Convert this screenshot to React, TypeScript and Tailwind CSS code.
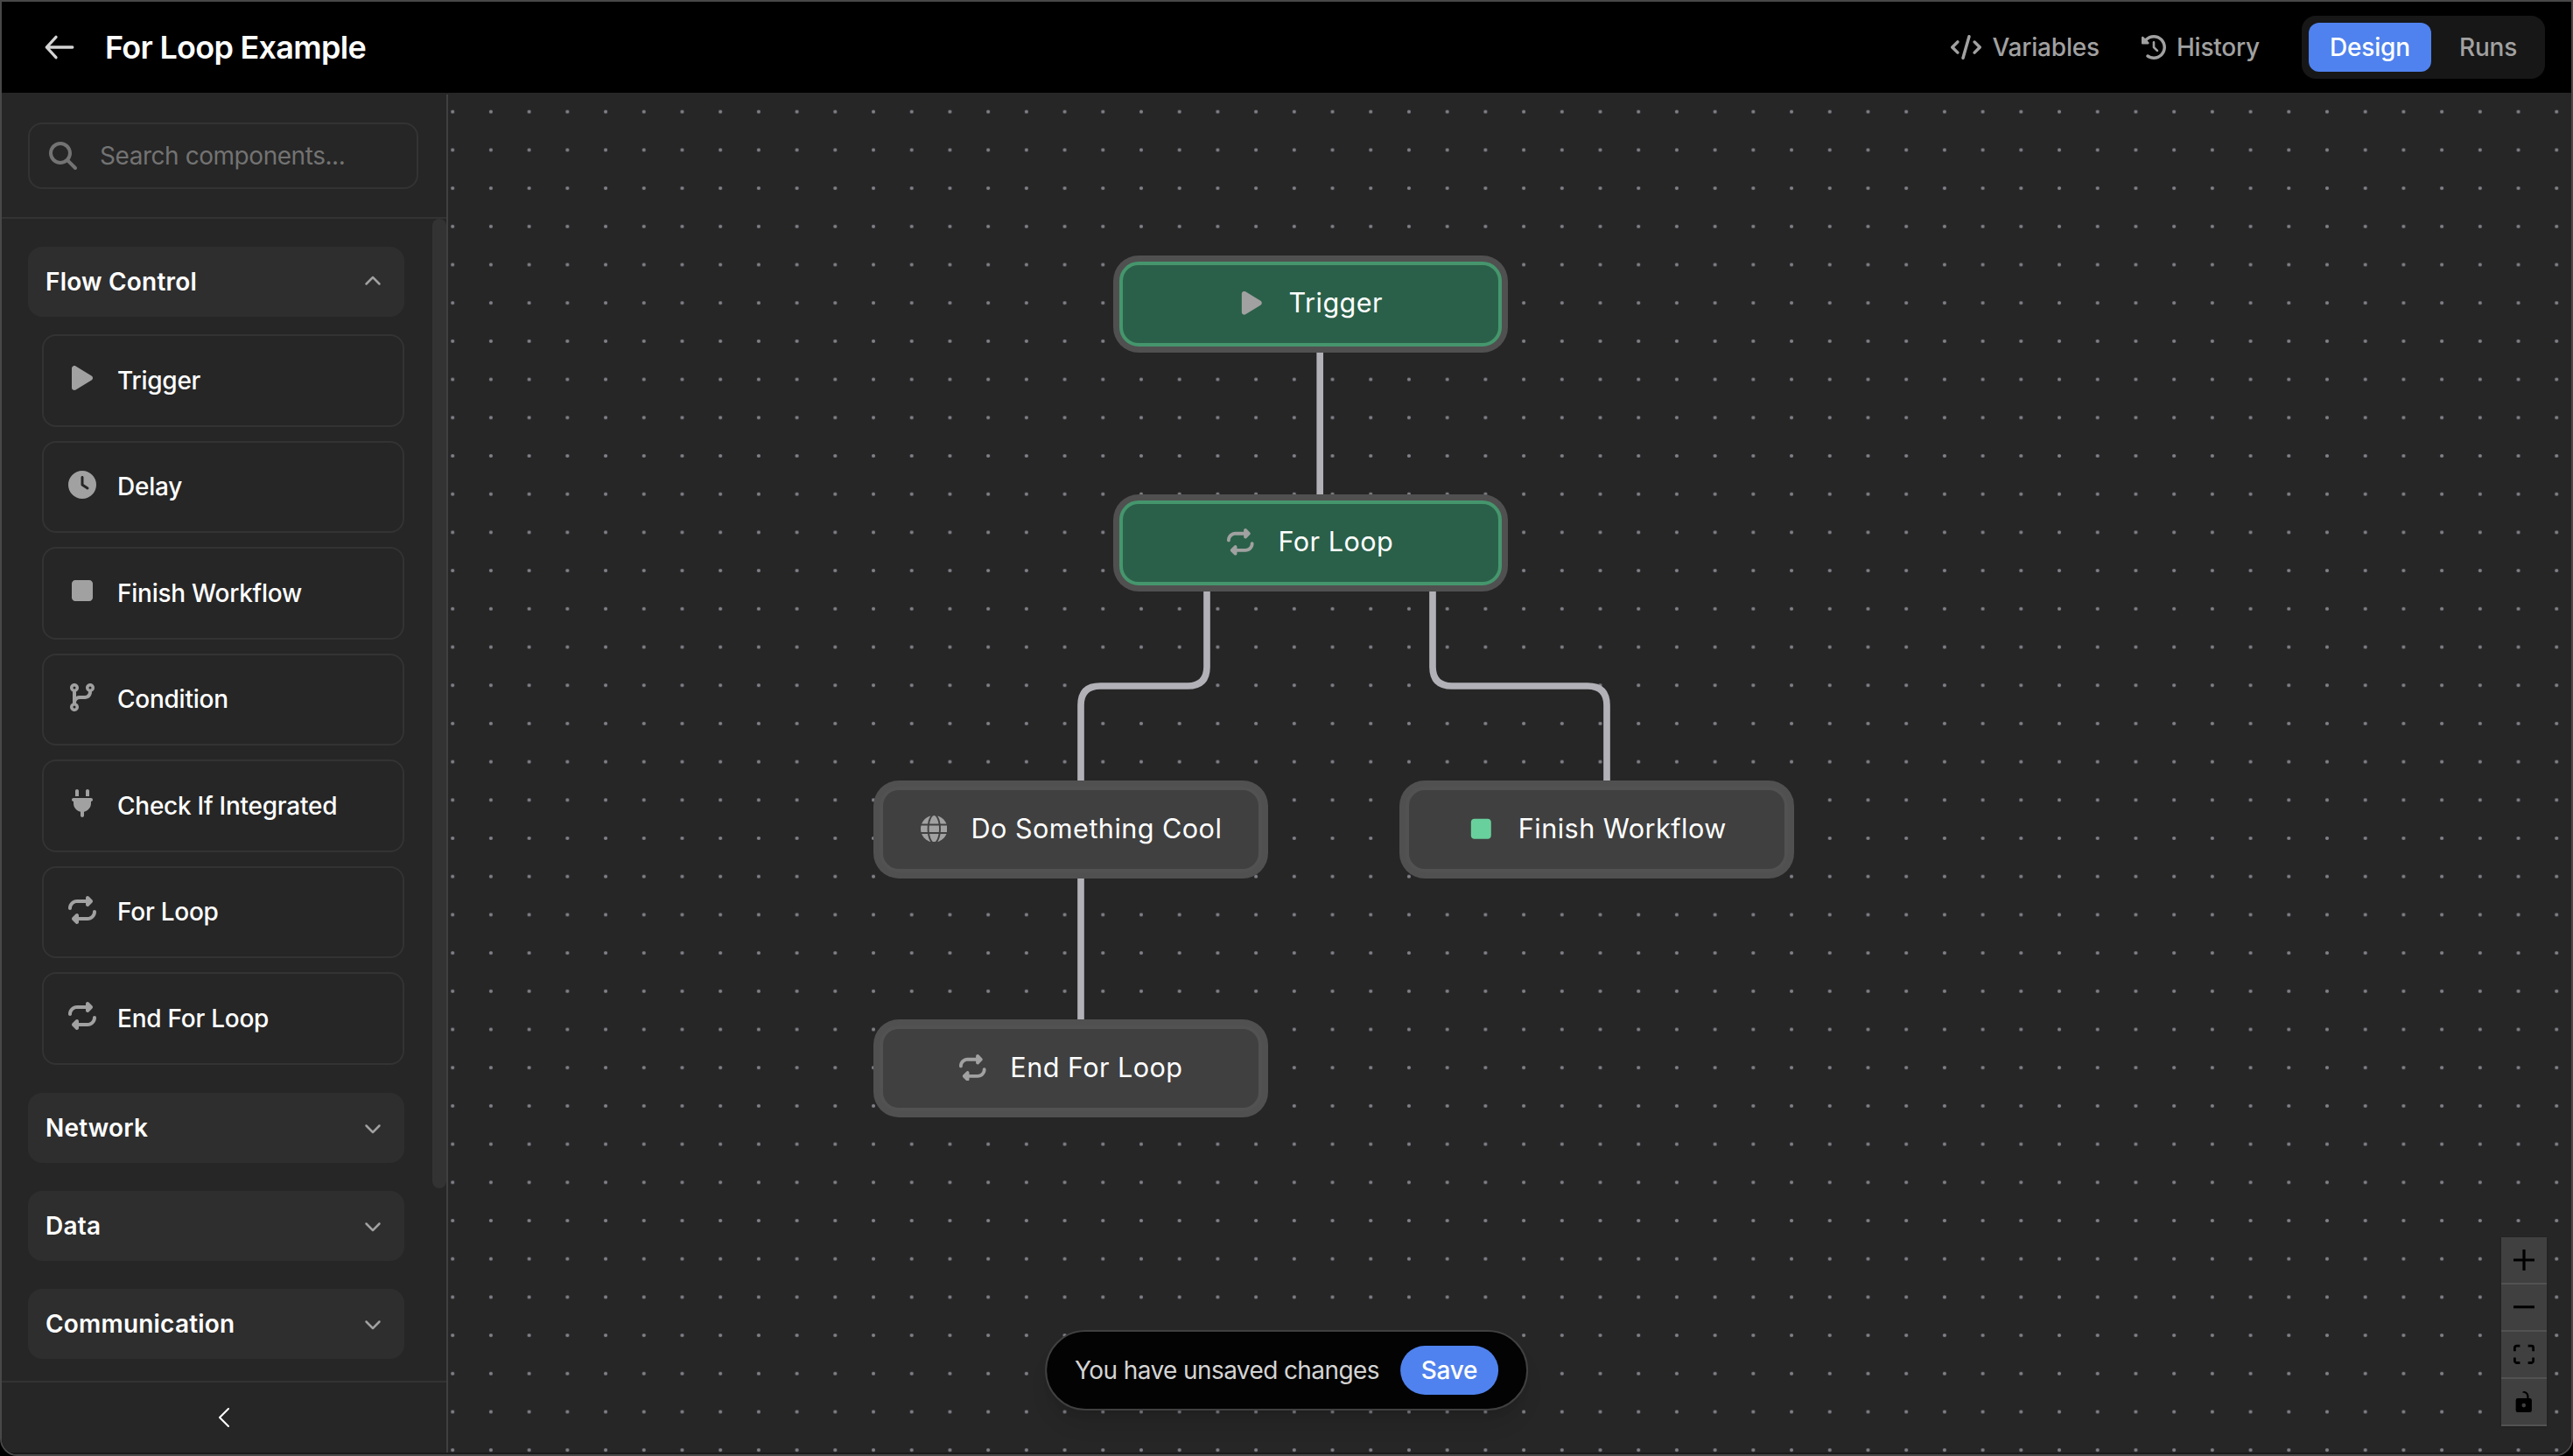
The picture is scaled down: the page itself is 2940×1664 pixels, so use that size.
import clsx from "clsx";
import type { IconType } from "react-icons";
import {
    FaChevronDown,
    FaChevronUp,
    FaClock,
    FaClockRotateLeft,
    FaCodeBranch,
    FaGlobe,
    FaMagnifyingGlass,
    FaPlay,
    FaPlug,
    FaRepeat,
    FaStop,
} from "react-icons/fa6";

const components: { label: string; icon: IconType }[] = [
    { label: "Trigger", icon: FaPlay },
    { label: "Delay", icon: FaClock },
    { label: "Finish Workflow", icon: FaStop },
    { label: "Condition", icon: FaCodeBranch },
    { label: "Check If Integrated", icon: FaPlug },
    { label: "For Loop", icon: FaRepeat },
    { label: "End For Loop", icon: FaRepeat },
];

type FlowNode = {
    id: string;
    label: string;
    icon: IconType;
    position: string;
    active?: boolean;
    iconColor?: string;
};

const nodes: FlowNode[] = [
    { id: "trigger", label: "Trigger", icon: FaPlay, position: "left-[766.8px] top-[190.8px]", active: true },
    { id: "loop", label: "For Loop", icon: FaRepeat, position: "left-[766.8px] top-[463.8px]", active: true },
    { id: "cool", label: "Do Something Cool", icon: FaGlobe, position: "left-[493.4px] top-[791.4px]" },
    { id: "finish", label: "Finish Workflow", icon: FaStop, position: "left-[1094.2px] top-[791.4px]", iconColor: "text-[#68d09c]" },
    { id: "end", label: "End For Loop", icon: FaRepeat, position: "left-[493.4px] top-[1064.4px]" },
];

const edges = [
    "M1508.2 396V572",
    "M1379 669V762Q1379 784 1357 784H1257Q1235 784 1235 806V900",
    "M1637 669V762Q1637 784 1659 784H1814Q1836 784 1836 806V900",
    "M1235 996V1173",
];

function Header() {
    return (
        <header className="flex h-[106px] shrink-0 items-center justify-between border-b-2 border-[#262626] bg-black pr-[30px] pl-[46px]">
            <div className="flex items-center gap-8">
                <svg className="h-10 w-10 text-neutral-300" fill="none" stroke="currentColor" viewBox="0 0 40 40">
                    <path strokeLinecap="round" strokeLinejoin="round" strokeWidth={3.3} d="M16 8.3L5.3 20m0 0l10.7 11.7M5.3 20h29.5" />
                </svg>
                <h1 className="text-[36px] font-semibold tracking-[-0.02em] text-white">For Loop Example</h1>
            </div>

            <div className="flex items-center text-[28px] font-medium tracking-[-0.2px] text-neutral-400">
                <button className="mr-12 flex items-center gap-3">
                    <svg className="h-7 w-[35px]" fill="currentColor" viewBox="0 0 640 512">
                        <path d="M392.8 1.2c-17-4.9-34.7 5-39.6 22l-128 448c-4.9 17 5 34.7 22 39.6s34.7-5 39.6-22l128-448c4.9-17-5-34.7-22-39.6zm80.6 120.1c-12.5 12.5-12.5 32.8 0 45.3L562.7 256l-89.4 89.4c-12.5 12.5-12.5 32.8 0 45.3s32.8 12.5 45.3 0l112-112c12.5-12.5 12.5-32.8 0-45.3l-112-112c-12.5-12.5-32.8-12.5-45.3 0zm-306.7 0c-12.5-12.5-32.8-12.5-45.3 0l-112 112c-12.5 12.5-12.5 32.8 0 45.3l112 112c12.5 12.5 32.8 12.5 45.3 0s12.5-32.8 0-45.3L77.3 256l89.4-89.4c12.5-12.5 12.5-32.8 0-45.3z" />
                    </svg>
                    <span>Variables</span>
                </button>
                <button className="mr-12 flex items-center gap-3">
                    <FaClockRotateLeft />
                    <span>History</span>
                </button>
                <div className="flex gap-2 rounded-2xl bg-neutral-900 p-2">
                    <button className="h-14 w-[140px] rounded-xl bg-[#4f82ee] text-white">Design</button>
                    <button className="h-14 w-[114px] rounded-xl">Runs</button>
                </div>
            </div>
        </header>
    );
}

function Section({ title, open = false }: { title: string; open?: boolean }) {
    return (
        <button className="flex h-20 w-full shrink-0 items-center justify-between rounded-2xl bg-[#2e2e2e] pr-[26px] pl-5 text-[28px] font-semibold tracking-[0.2px] text-white">
            <span>{title}</span>
            {open ? <FaChevronUp className="text-xl text-neutral-400" /> : <FaChevronDown className="text-xl text-neutral-400" />}
        </button>
    );
}

function Sidebar() {
    return (
        <aside className="flex w-[510px] shrink-0 flex-col border-r-2 border-[#404040] bg-[#262626]">
            <div className="border-b-2 border-[#333] py-8 pr-8 pl-[30px]">
                <div className="flex h-[76px] items-center gap-[26px] rounded-2xl border-2 border-[#333] px-[22px] text-neutral-500">
                    <FaMagnifyingGlass className="text-[32px]" />
                    <span className="text-[28px] tracking-[-0.45px]">Search components...</span>
                </div>
            </div>

            <div className="flex min-h-0 grow justify-between overflow-hidden pl-[30px]">
                <div className="flex w-[430px] flex-col gap-8 pt-8">
                    <div>
                        <Section title="Flow Control" open />
                        <div className="mt-5 ml-4 flex flex-col gap-4">
                            {components.map(({ label, icon: Icon }) => (
                                <div key={label} className="flex h-[105.5px] items-center gap-6 rounded-2xl border-2 border-[#333] px-7">
                                    <Icon className="mb-[5px] text-[32px] text-neutral-400" />
                                    <span className="text-[28px] font-medium tracking-[-0.25px] text-white">{label}</span>
                                </div>
                            ))}
                        </div>
                    </div>
                    <Section title="Network" />
                    <Section title="Data" />
                    <Section title="Communication" />
                </div>
                {/* Scrollbar thumb */}
                <div className="h-[1108px] w-4 rounded-full bg-[#333]"></div>
            </div>

            <button className="flex h-[82px] shrink-0 items-center justify-center border-t-2 border-[#333] text-white">
                <svg className="h-8 w-8" fill="none" stroke="currentColor" viewBox="0 0 24 24"><path strokeLinecap="round" strokeLinejoin="round" strokeWidth={1.5} d="M15.75 19.5L8.25 12l7.5-7.5" /></svg>
            </button>
        </aside>
    );
}

function NodeCard({ label, icon: Icon, position, active, iconColor = "text-neutral-400" }: FlowNode) {
    return (
        <div
            className={clsx(
                "absolute flex h-[97.2px] w-[437px] items-center justify-center gap-[27.5px] rounded-[22px] border-4 pb-[2px] ring-[7px] ring-[#505050]",
                active ? "border-[#45966d] bg-[#2a6049]" : "border-[#525252] bg-[#404040]",
                position
            )}
        >
            <Icon className={clsx("shrink-0 text-[30.6px]", iconColor)} />
            <span className="text-[30.6px] leading-none tracking-[0.45px] whitespace-nowrap text-white">{label}</span>
        </div>
    );
}

function Controls() {
    const button = "flex h-[54px] w-[52px] items-center justify-center border-b-2 border-[#525252] bg-[#404040]";
    return (
        <div className="absolute right-7 bottom-[30px] flex flex-col text-black shadow-sm">
            <button className={button}>
                <svg className="h-6 w-6" fill="currentColor" viewBox="0 0 32 32"><path d="M32 18.133H18.133V32h-4.266V18.133H0v-4.266h13.867V0h4.266v13.867H32z" /></svg>
            </button>
            <button className={button}>
                <svg className="h-6 w-6" fill="currentColor" viewBox="0 0 32 5"><path d="M0 0h32v4.2H0z" /></svg>
            </button>
            <button className={button}>
                <svg className="h-6 w-6" fill="currentColor" viewBox="0 0 32 30"><path d="M3.692 4.63c0-.53.4-.938.939-.938h5.215V0H4.708C2.13 0 0 2.054 0 4.63v5.216h3.692V4.631zM27.354 0h-5.2v3.692h5.17c.53 0 .984.4.984.939v5.215H32V4.631A4.624 4.624 0 0027.354 0zm.954 24.83c0 .532-.4.94-.939.94h-5.215v3.768h5.215c2.577 0 4.631-2.13 4.631-4.707v-5.139h-3.692v5.139zm-23.677.94c-.531 0-.939-.4-.939-.94v-5.138H0v5.139c0 2.577 2.13 4.707 4.708 4.707h5.138V25.77H4.631z" /></svg>
            </button>
            <button className={button}>
                <svg className="h-6 w-6" fill="currentColor" viewBox="0 0 25 32"><path d="M21.333 10.667H19.81V7.619C19.81 3.429 16.38 0 12.19 0c-4.114 1.828-1.37 2.133.305 2.438 1.676.305 4.42 2.59 4.42 5.181v3.048H3.047A3.056 3.056 0 000 13.714v15.238A3.056 3.056 0 003.048 32h18.285a3.056 3.056 0 003.048-3.048V13.714a3.056 3.056 0 00-3.047-3.047zM12.19 24.533a3.056 3.056 0 01-3.047-3.047 3.056 3.056 0 013.047-3.048 3.056 3.056 0 013.048 3.048 3.056 3.056 0 01-3.048 3.047z" /></svg>
            </button>
        </div>
    );
}

function Canvas() {
    return (
        <main className="relative grow overflow-hidden bg-[#262626]">
            <svg className="absolute inset-0 h-[1552px] w-[2426px]" viewBox="512 108 2426 1552" fill="none">
                <defs>
                    <pattern id="dots" x="495.35" y="105.85" width="43.71" height="43.7" patternUnits="userSpaceOnUse">
                        <circle cx="21.85" cy="21.85" r="2.1" fill="#81818a" />
                    </pattern>
                </defs>
                <rect x="512" y="108" width="2426" height="1552" fill="url(#dots)" />
                {edges.map((d) => (
                    <path key={d} d={d} stroke="#b1b1b7" strokeWidth={7.65} />
                ))}
            </svg>

            {nodes.map((node) => (
                <NodeCard key={node.id} {...node} />
            ))}

            <Controls />
        </main>
    );
}

function SaveBar() {
    return (
        <div className="absolute bottom-[50px] left-1/2 flex h-[92px] -translate-x-1/2 items-center gap-6 rounded-full border-2 border-[#404040] bg-[#030303] px-8 text-[28px] whitespace-nowrap shadow-xl">
            <span className="tracking-[-0.6px] text-neutral-300">You have unsaved changes</span>
            <button className="h-14 w-28 rounded-full bg-[#4f82ee] font-medium tracking-[-0.3px] text-white">Save</button>
        </div>
    );
}

export default function App() {
    return (
        <div className="h-[1664px] w-[2940px] bg-black font-['Inter',sans-serif]">
            <div className="relative flex h-full flex-col overflow-hidden rounded-b-[20px] border-2 border-[#484848]">
                <Header />
                <div className="flex min-h-0 grow border-b-2 border-[#1a1a1a]">
                    <Sidebar />
                    <Canvas />
                </div>
                <SaveBar />
            </div>
        </div>
    );
}
